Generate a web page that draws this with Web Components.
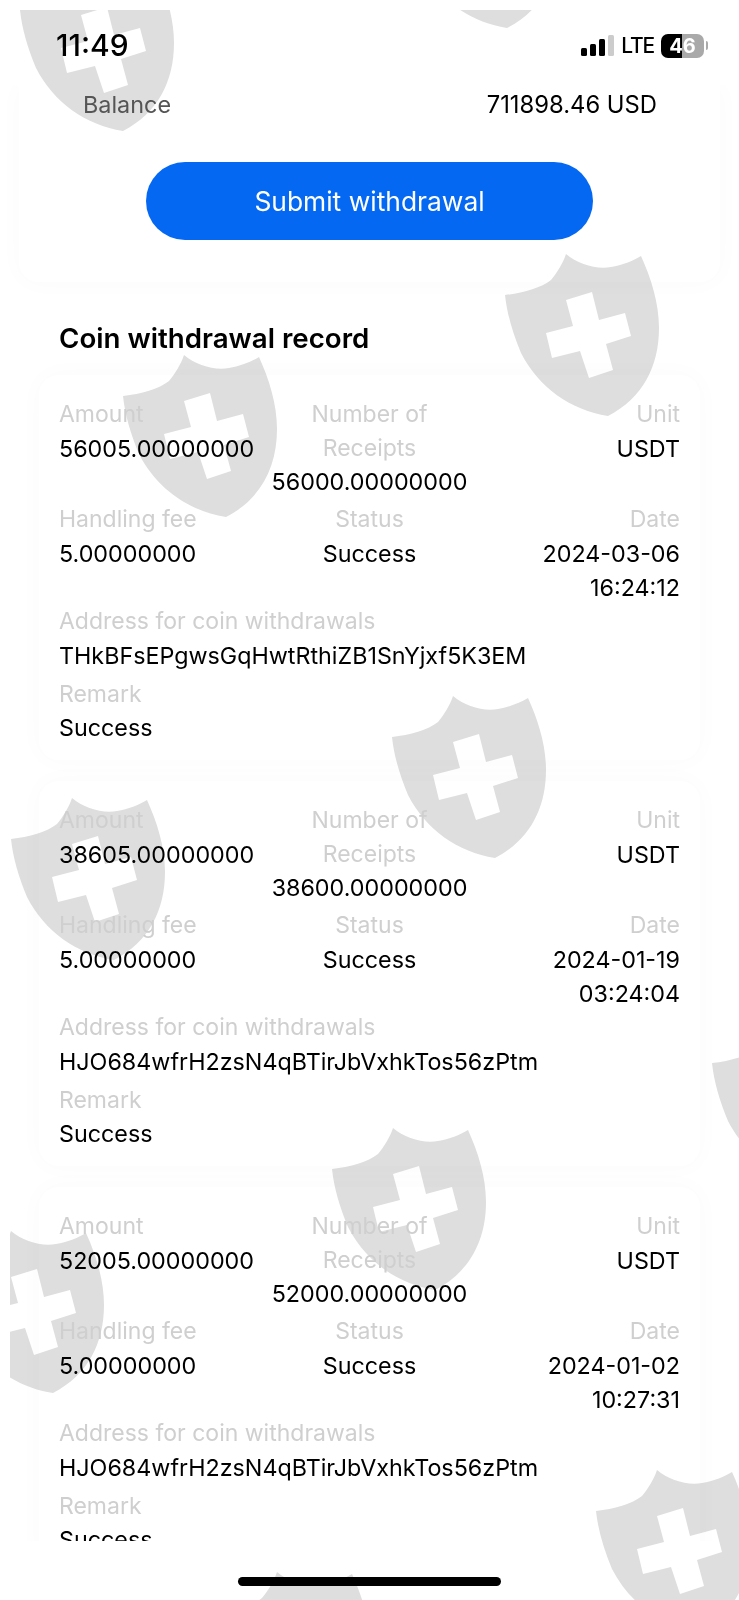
<!DOCTYPE html>
<html lang="en">
<head>
  <meta charset="UTF-8">
  <title>Coin withdrawal</title>
  <style>
    html, body { margin: 0; background: #fff; }
    body {
      width: 739px;
      height: 1600px;
      overflow: hidden;
      position: relative;
      font-family: Inter, "Liberation Sans", sans-serif;
      color: #000;
    }
    .marks { position: absolute; inset: 0; overflow: hidden; clip-path: inset(10px 0 0 10px); }
    .page { position: relative; display: flex; flex-direction: column; height: 1600px; overflow: hidden; }
  </style>
</head>
<body>
  <div class="marks">
    <wm-shield x="8" y="-47"></wm-shield>
    <wm-shield x="392" y="-150"></wm-shield>
    <wm-shield x="493" y="238"></wm-shield>
    <wm-shield x="111" y="339"></wm-shield>
    <wm-shield x="380" y="680"></wm-shield>
    <wm-shield x="-1" y="782"></wm-shield>
    <wm-shield x="700" y="1006"></wm-shield>
    <wm-shield x="320" y="1112"></wm-shield>
    <wm-shield x="-62" y="1215"></wm-shield>
    <wm-shield x="584" y="1454"></wm-shield>
    <wm-shield x="204" y="1556"></wm-shield>
  </div>

  <div class="page">
    <status-bar time="11:49" level="46"></status-bar>
    <record-list>
      <balance-card balance="711898.46 USD"></balance-card>
      <section-title>Coin withdrawal record</section-title>
      <record-card amount="56005.00000000" receipts="56000.00000000" unit="USDT" fee="5.00000000" status="Success"
        date="2024-03-06 16:24:12" address="THkBFsEPgwsGqHwtRthiZB1SnYjxf5K3EM" remark="Success"></record-card>
      <record-card amount="38605.00000000" receipts="38600.00000000" unit="USDT" fee="5.00000000" status="Success"
        date="2024-01-19 03:24:04" address="HJO684wfrH2zsN4qBTirJbVxhkTos56zPtm" remark="Success"></record-card>
      <record-card amount="52005.00000000" receipts="52000.00000000" unit="USDT" fee="5.00000000" status="Success"
        date="2024-01-02 10:27:31" address="HJO684wfrH2zsN4qBTirJbVxhkTos56zPtm" remark="Success"></record-card>
    </record-list>
    <home-bar></home-bar>
  </div>

  <script>
    customElements.define('wm-shield', class extends HTMLElement {
      constructor() {
        super();
        const x = this.getAttribute('x');
        const y = this.getAttribute('y');
        this.attachShadow({ mode: 'open' });
        this.shadowRoot.innerHTML = `
          <style>
            :host {
              position: absolute;
              left: ${x}px;
              top: ${y}px;
              width: 180px;
              height: 190px;
              display: block;
            }
            :host([over]) { mix-blend-mode: lighten; }
            svg { display: block; }
            .body { fill: var(--shield, #dedede); }
            .cross { fill: var(--cross, #fff); }
          </style>
          <svg width="180" height="190" viewBox="0 0 180 190">
            <path class="body" d="M73 16C85 26 104 32 118 29C129 27 140 23 148 18C158 40 166 65 166 90C166 128 150 160 115 178C78 172 46 150 28 115C20 96 14 76 12 57C30 55 48 50 58 42C64 35 70 25 73 16Z"/>
            <path class="cross" d="M73 62L99 54L106 82L132 75L138 98L113 106L120 132L96 140L87 113L59 120L53 95L80 88Z"/>
          </svg>
        `;
      }
    });

    customElements.define('status-bar', class extends HTMLElement {
      constructor() {
        super();
        this.attachShadow({ mode: 'open' });
        this.shadowRoot.innerHTML = `
          <style>
            :host {
              display: flex;
              align-items: center;
              justify-content: space-between;
              height: 85px;
              padding: 4px 31px 0 56px;
              box-sizing: border-box;
              flex: none;
            }
            .time { font-size: 30px; font-weight: 500; line-height: 1; }
            .right { display: flex; align-items: center; gap: 7px; margin-top: 2px; }
            .lte { font-size: 21px; font-weight: 500; line-height: 1; letter-spacing: -1.2px; }
            .batt {
              position: relative;
              width: 43px;
              height: 24px;
              border-radius: 7px;
              overflow: hidden;
              background: linear-gradient(90deg, #000 0 21px, #a9a9a9 21px);
              color: #fff;
              font-size: 20px;
              font-weight: 700;
              line-height: 24px;
              text-align: center;
            }
            .nub { width: 2px; height: 9px; background: #aaa; border-radius: 0 2px 2px 0; margin-left: -5px; }
            svg { display: block; }
          </style>
          <div class="time">${this.getAttribute('time')}</div>
          <div class="right">
            <svg width="33" height="21" viewBox="0 0 33 21">
              <rect x="0" y="13" width="6" height="8" rx="1.5" fill="#000"/>
              <rect x="9" y="9" width="6" height="12" rx="1.5" fill="#000"/>
              <rect x="18" y="4" width="6" height="17" rx="1.5" fill="#000"/>
              <rect x="27" y="0" width="6" height="21" rx="1.5" fill="#ccc"/>
            </svg>
            <div class="lte">LTE</div>
            <div class="batt">${this.getAttribute('level')}</div>
            <div class="nub"></div>
          </div>
        `;
      }
    });

    customElements.define('record-list', class extends HTMLElement {
      constructor() {
        super();
        this.attachShadow({ mode: 'open' });
        this.shadowRoot.innerHTML = `
          <style>
            :host {
              display: flex;
              flex-direction: column;
              height: 1456px;
              flex: none;
              overflow: hidden;
              padding: 0 19px;
              box-sizing: border-box;
            }
          </style>
          <slot></slot>
        `;
      }
    });

    customElements.define('balance-card', class extends HTMLElement {
      constructor() {
        super();
        this.attachShadow({ mode: 'open' });
        this.shadowRoot.innerHTML = `
          <style>
            :host {
              display: block;
              flex: none;
              height: 197px;
              box-sizing: border-box;
              padding: 3px 63px 0 64px;
              border-radius: 0 0 20px 20px;
              box-shadow: 0 0 26px rgba(0, 0, 0, .025);
            }
            .row { display: flex; justify-content: space-between; font-size: 23.4px; line-height: 34px; }
            .label { color: #555; }
            .val { font-size: 23.8px; }
            button {
              display: block;
              width: 447px;
              height: 78px;
              margin: 40px 0 0 63px;
              border: 0;
              border-radius: 39px;
              background: #0468f2;
              color: #fff;
              font: 400 26.4px Inter, "Liberation Sans", sans-serif;
            }
          </style>
          <div class="row"><span class="label">Balance</span><span class="val">${this.getAttribute('balance')}</span></div>
          <button>Submit withdrawal</button>
        `;
      }
    });

    customElements.define('section-title', class extends HTMLElement {
      constructor() {
        super();
        this.attachShadow({ mode: 'open' });
        this.shadowRoot.innerHTML = `
          <style>
            :host {
              display: block;
              flex: none;
              padding: 39px 0 0 40px;
              height: 93px;
              box-sizing: border-box;
              font-size: 27.7px;
              font-weight: 600;
              line-height: 34px;
            }
          </style>
          <slot></slot>
        `;
      }
    });

    customElements.define('record-field', class extends HTMLElement {
      constructor() {
        super();
        this.attachShadow({ mode: 'open' });
        this.shadowRoot.innerHTML = `
          <style>
            :host { display: block; min-width: 0; text-align: var(--align, left); }
            .label { color: #cfcfcf; font-size: 23px; }
          </style>
          <div class="label">${this.getAttribute('label')}</div>
          <div>${this.getAttribute('value')}</div>
        `;
      }
    });

    customElements.define('record-card', class extends HTMLElement {
      constructor() {
        super();
        const a = (n) => this.getAttribute(n);
        this.attachShadow({ mode: 'open' });
        this.shadowRoot.innerHTML = `
          <style>
            :host {
              display: block;
              flex: none;
              height: 385px;
              margin: 0 20px 21px;
              box-sizing: border-box;
              padding: 23px 20px 0;
              border-radius: 20px;
              box-shadow: 0 0 26px rgba(0, 0, 0, .025);
              font-size: 23.3px;
              line-height: 33.7px;
            }
            .grid {
              display: grid;
              grid-template-columns: repeat(3, 1fr);
              row-gap: 4px;
            }
            .mid { --align: center; }
            .end { --align: right; }
            .wide { margin-top: 1px; }
            .last { margin-top: 5px; }
          </style>
          <div class="grid">
            <record-field label="Amount" value="${a('amount')}"></record-field>
            <record-field class="mid" label="Number of Receipts" value="${a('receipts')}"></record-field>
            <record-field class="end" label="Unit" value="${a('unit')}"></record-field>
            <record-field label="Handling fee" value="${a('fee')}"></record-field>
            <record-field class="mid" label="Status" value="${a('status')}"></record-field>
            <record-field class="end" label="Date" value="${a('date')}"></record-field>
          </div>
          <record-field class="wide" label="Address for coin withdrawals" value="${a('address')}"></record-field>
          <record-field class="last" label="Remark" value="${a('remark')}"></record-field>
        `;
      }
    });

    customElements.define('home-bar', class extends HTMLElement {
      constructor() {
        super();
        this.attachShadow({ mode: 'open' });
        this.shadowRoot.innerHTML = `
          <style>
            :host {
              display: flex;
              justify-content: center;
              position: relative;
              flex: 1;
              padding-top: 36px;
              box-sizing: border-box;
            }
            .bar { width: 263px; height: 9px; border-radius: 5px; background: #000; }
            wm-shield { --shield: #525252; --cross: #525252; }
          </style>
          <div class="bar"></div>
        `;
        // the watermark sits over the bar and greys it out
        const over = document.createElement('wm-shield');
        over.setAttribute('x', '204');
        over.setAttribute('y', '15');
        over.setAttribute('over', '');
        this.shadowRoot.appendChild(over);
      }
    });
  </script>
</body>
</html>
